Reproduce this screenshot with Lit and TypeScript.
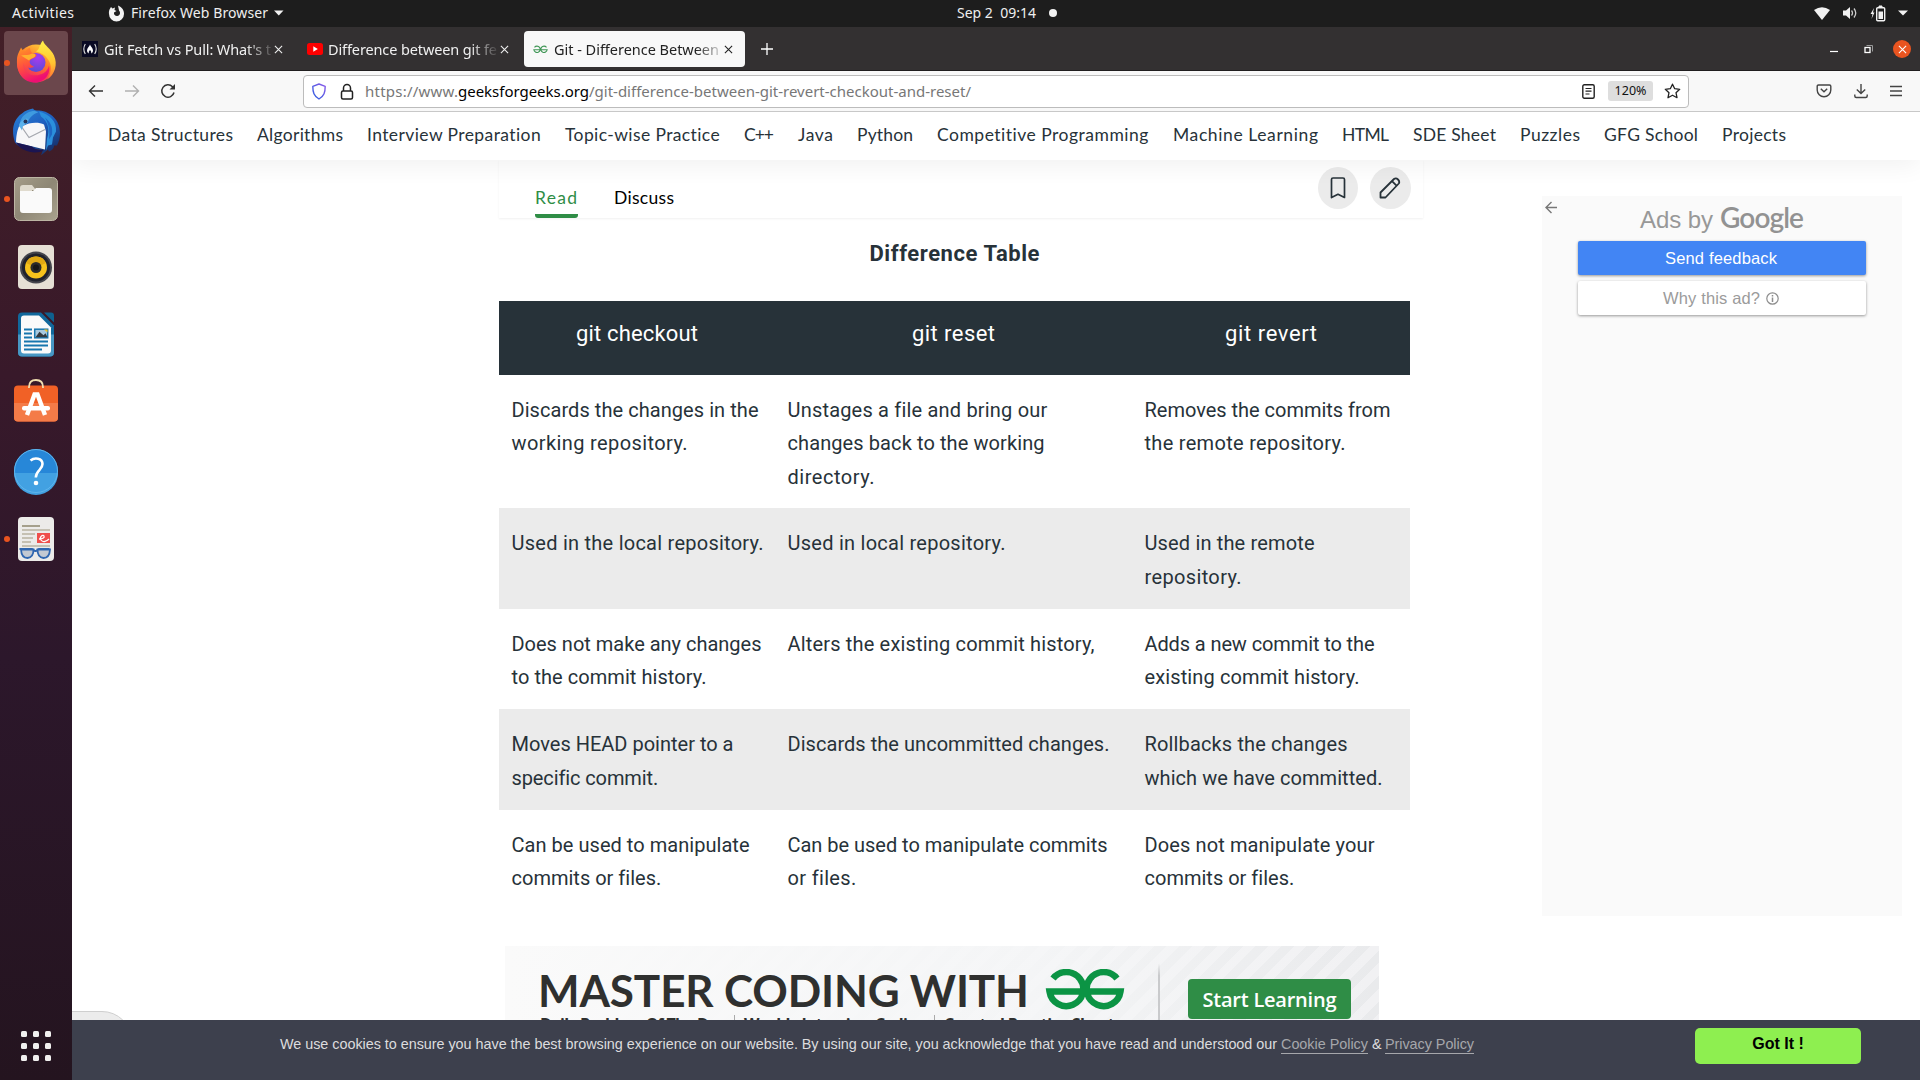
import { LitElement, html, svg, css } from "lit";
import { customElement, property } from "lit/decorators.js";

/* One line of text tracked out to a given measure. */
@customElement("fit-text")
class FitText extends LitElement {
  @property() text = "";
  @property({ type: Number }) width = 0;
  static styles = css`
    :host { display: inline-block; white-space: pre; flex: none; }
    .line { display: inline-block; }
  `;
  render() {
    return html`<span class="line">${this.text}</span>`;
  }
  updated() {
    const line = this.renderRoot.querySelector(".line") as HTMLElement;
    this.style.width = `${this.width}px`;
    line.style.letterSpacing = "0px";
    const natural = line.getBoundingClientRect().width;
    line.style.letterSpacing = `${(this.width - natural) / Math.max(1, this.text.length - 1)}px`;
    line.style.marginRight = "-20px";
  }
}

const fit = (text: string, width: number) => html`<fit-text .text=${text} .width=${width}></fit-text>`;

const nav: [string, number][] = [
  ["Data Structures", 125], ["Algorithms", 86], ["Interview Preparation", 174], ["Topic-wise Practice", 155],
  ["C++", 30], ["Java", 35], ["Python", 56], ["Competitive Programming", 212], ["Machine Learning", 145],
  ["HTML", 47], ["SDE Sheet", 83], ["Puzzles", 60], ["GFG School", 94], ["Projects", 64],
];

const rows: [string, number][][][] = [
  [
    [["Discards the changes in the", 247], ["working repository.", 176]],
    [["Unstages a file and bring our", 259], ["changes back to the working", 257], ["directory.", 87]],
    [["Removes the commits from", 246], ["the remote repository.", 201]],
  ],
  [
    [["Used in the local repository.", 252]],
    [["Used in local repository.", 218]],
    [["Used in the remote", 170], ["repository.", 97]],
  ],
  [
    [["Does not make any changes", 250], ["to the commit history.", 195]],
    [["Alters the existing commit history,", 307]],
    [["Adds a new commit to the", 230], ["existing commit history.", 215]],
  ],
  [
    [["Moves HEAD pointer to a", 222], ["specific commit.", 146]],
    [["Discards the uncommitted changes.", 322]],
    [["Rollbacks the changes", 203], ["which we have committed.", 238]],
  ],
  [
    [["Can be used to manipulate", 238], ["commits or files.", 149]],
    [["Can be used to manipulate commits", 320], ["or files.", 68]],
    [["Does not manipulate your", 230], ["commits or files.", 149]],
  ],
];

const firefoxMark = svg`
  <circle cx="24" cy="26" r="19" fill="url(#ffBody)"/>
  <path d="M24 14C28 12 27 7 31 3c1 5 8 8 11 15 4 9 1 19-7 24 5-7 5-15 1-20-3-5-8-7-12-8z" fill="url(#ffFlame)"/>
  <circle cx="24" cy="25" r="9.5" fill="url(#ffGlobe)"/>
  <path d="M5 22C5 17 8 13 9 10c1 2 2 3 4 4 1-2 3-3 5-4 0 3 1 5 3 6 3 0 4 1 3 3-2 2-5 2-6 4-1 3 1 5 4 6-4 3-9 1-11-4-1 10 9 15 17 12 5-1 8-5 9-9 2 9-5 17-14 17C12 45 4 36 5 22z" fill="url(#ffTail)"/>
  <path d="M9 18c5-1 8 0 11-2 3 0 4 1 3 3-2 2-5 2-6 4z" fill="#ffb02e"/>`;

const dockIcons = {
  firefox: html`<svg viewBox="0 0 48 48" class="ico">
    <defs>
      <linearGradient id="ffBody" x1=".8" y1="0" x2=".3" y2="1"><stop offset="0" stop-color="#ffd93b"/><stop offset=".45" stop-color="#ff7a2a"/><stop offset="1" stop-color="#f0156e"/></linearGradient>
      <linearGradient id="ffFlame" x1="0" y1="0" x2="0" y2="1"><stop offset="0" stop-color="#fff04a"/><stop offset=".6" stop-color="#ffc230"/><stop offset="1" stop-color="#ff6a35"/></linearGradient>
      <linearGradient id="ffTail" x1="0" y1="0" x2=".4" y2="1"><stop offset="0" stop-color="#ff9a22"/><stop offset=".55" stop-color="#ff4f3f"/><stop offset="1" stop-color="#ee0f73"/></linearGradient>
      <radialGradient id="ffGlobe" cx=".6" cy=".25" r=".9"><stop offset="0" stop-color="#a93af0"/><stop offset="1" stop-color="#4a4fd0"/></radialGradient>
    </defs><g transform="translate(0 -1.5)">${firefoxMark}</g></svg>`,
  thunderbird: html`<svg viewBox="0 0 48 48" class="ico">
    <defs><linearGradient id="tb" x1="0" y1="0" x2=".6" y2="1"><stop offset="0" stop-color="#2a86d8"/><stop offset=".5" stop-color="#1f5fc0"/><stop offset="1" stop-color="#17336f"/></linearGradient></defs>
    <g transform="translate(0 1.5)">
    <path d="M3 34C-1 22 1 11 10 5c3-3 7-4 11-5 1 2 3 2 6 2C39 3 48 12 48 24c0 5-1 9-3 13l-3 0c0 3-2 5-5 6l-1-2-7 6 2-6c-6 1-13-1-18-6l1 6C9 39 5 37 3 34z" fill="url(#tb)"/>
    <path d="M27 3c11 3 18 10 17 20l-3 6-1 7-4 1-2 5 1-12c3-9 1-17-6-22z" fill="#2b8fdc"/>
    <path d="M33 9c6 5 8 10 7 17l-3 5c1-9 0-15-4-22z" fill="#1f66c4"/>
    <path d="M8 20c-1-8 2-13 8-16 4-2 8-2 10 0-6 2-9 6-10 10l-5 2z" fill="#3f9be0"/>
    <path d="M12 17c4-3 15-4 20-1l2 7-1 18L4 34c0-5 1-12 3-16z" fill="#f7f7f8"/>
    <path d="M8 16l9 13 16-8" fill="none" stroke="#a5a8ae" stroke-width="1.2"/>
    <path d="M7 17c1-4 4-6 8-7 2 2 1 5-2 6-2 1-3 3-3 6z" fill="#5ab2ec"/>
    <circle cx="13.5" cy="13" r="2" fill="#23355c"/>
    <path d="M4 34l16 4c3 3 8 4 12 4-8 4-22 2-28-8z" fill="#1b1552"/></g></svg>`,
  files: html`<svg viewBox="0 0 48 48" class="ico">
    <defs><linearGradient id="fl" x1="0" y1="0" x2="1" y2="1"><stop offset="0" stop-color="#a59d89"/><stop offset=".5" stop-color="#8e8775"/><stop offset="1" stop-color="#aaa38f"/></linearGradient></defs>
    <rect x="2.5" y="2.5" width="43" height="43" rx="5" fill="url(#fl)" stroke="#bdb6a4"/>
    <path d="M8 13q0-3 3-3h9l4 5h-4v10H8z" fill="#e0dbce"/>
    <path d="M8 16h13l3-3h13q3 0 3 3v19q0 3-3 3H11q-3 0-3-3z" fill="#fafafa"/></svg>`,
  rhythmbox: html`<svg viewBox="0 0 48 48" class="ico">
    <rect x="6" y="2" width="36" height="44" rx="4" fill="#e6e0d5"/>
    <circle cx="24" cy="24.5" r="16" fill="#44454c"/><circle cx="24" cy="24.5" r="14" fill="#20222c"/>
    <circle cx="24" cy="24.5" r="11" fill="#f6c21c"/><path d="M24 24.5L14 20a11 11 0 0 1 20 0z" fill="#e0a813"/>
    <circle cx="24" cy="24.5" r="5.5" fill="#2b2b2b"/><circle cx="24" cy="24.5" r="3" fill="#171717"/></svg>`,
  writer: html`<svg viewBox="0 0 48 48" class="ico">
    <g transform="translate(0 -.5)">
    <path d="M10 2h19l13 13v27q0 4-4 4H10q-4 0-4-4V6q0-4 4-4z" fill="#11689c"/>
    <path d="M6 24h36v18q0 4-4 4H10q-4 0-4-4z" fill="#4797c4"/>
    <path d="M12 5h15l12 12v23q0 3-3 3H12q-3 0-3-3V8q0-3 3-3z" fill="#fafafa"/>
    <path d="M32 2h7q3 0 3 3v7z" fill="#0f618f"/>
    <path d="M12 19h8M12 23h8M12 27h8M12 31h24M12 35h24M12 39h18" stroke="#1776ae" stroke-width="2"/>
    <rect x="22.7" y="18.7" width="13" height="8.6" fill="#a7c9df" stroke="#1776ae" stroke-width="1.5"/>
    <path d="M23.5 26.8l4-5.5 4 3.5 2-2 2 4z" fill="#333a40"/><path d="M32 19h3.5v3z" fill="#f6c31c"/></g></svg>`,
  software: html`<svg viewBox="0 0 48 48" class="ico">
    <g transform="translate(0 -2)">
    <rect x="2" y="8.5" width="44" height="36" rx="4" fill="#f16126"/><path d="M2 26h44v14.5q0 4-4 4H6q-4 0-4-4z" fill="#f47b48"/>
    <path d="M17 11v-1q0-7 7-7t7 7v1" fill="none" stroke="#f0deb0" stroke-width="1.8"/>
    <path d="M15 38l7.5-20.5h3L33 38" fill="none" stroke="#fff" stroke-width="4.4"/>
    <rect x="10" y="29" width="28" height="4.6" rx="2" fill="#fff"/></g></svg>`,
  help: html`<svg viewBox="0 0 48 48" class="ico">
    <circle cx="24" cy="24" r="22" fill="#2787d8"/><path d="M2 26a22 22 0 0 0 44 0z" fill="#42a1e2"/>
    <circle cx="24" cy="24" r="21.5" fill="none" stroke="#5fb5ec"/>
    <path d="M18.5 13.5c4-3.2 12-2.6 12 3.6 0 6-6.700 6.200-6.700 13.400" fill="none" stroke="#fff" stroke-width="2.6"/>
    <circle cx="24" cy="36" r="2.3" fill="#fff"/></svg>`,
  evince: html`<svg viewBox="0 0 48 48" class="ico">
    <rect x="6" y="2" width="36" height="44" rx="4" fill="#ecebe9"/>
    <path d="M10 11h18" stroke="#a5a08c" stroke-width="2"/>
    <path d="M10 15h28M10 19h13M10 23h11M10 27h9M10 31h28" stroke="#c5c0b2" stroke-width="2"/>
    <rect x="25" y="18" width="13" height="10" fill="#ef4e4b"/>
    <path d="M27 24c3 0 6-1 5-3s-5 1-3 4 6 1 8-1" fill="none" stroke="#fff" stroke-width="1.3"/>
    <path d="M7.5 34H20l3 2h1l3-2h10.500" fill="none" stroke="#2f66b0" stroke-width="1.8"/>
    <path d="M9 34.5h12.500q0 8-6 8.500-6 0-6.500-8.500zM25.500 34.500H38q-.5 8.500-6.500 8.500-6-.5-6-8.500z" fill="#c3c9d2" stroke="#2f66b0" stroke-width="1.8"/>
    </svg>`,
};

const cross = html`<svg class="x" viewBox="0 0 10 10" width="9" height="9"><path d="M1 1l8 8M9 1L1 9" stroke="currentColor" stroke-width="1.2"/></svg>`;
const gfg = (w: number, h: number, color: string, sw: number) => html`<svg width=${w} height=${h} viewBox="0 0 80 42">
  <g fill="none" stroke=${color} stroke-width=${sw}>
    <path d="M8 9.500A17 17 0 1 1 4.500 22.500H75.500A17 17 0 1 1 72 9.500"/>
  </g></svg>`;

@customElement("app-root")
class AppRoot extends LitElement {
  static styles = css`
    :host { display: block; width: 1920px; height: 1080px; overflow: hidden; font-family: "Liberation Sans", sans-serif; }
    * { box-sizing: border-box; }
    svg { display: block; flex: none; }
    .desktop { display: grid; grid-template: 27px 1053px / 72px 1848px; height: 1080px; }
    .ui { font-family: "Noto Sans", sans-serif; }

    .topbar { grid-column: 1 / 3; background: #1d1d1d; color: #efefef; font-size: 14px; line-height: 26px; display: flex; align-items: center; padding: 0 12px 1px; }
    .topbar .app { display: flex; align-items: center; margin-left: 34px; gap: 6px; }
    .topbar .clock { display: flex; align-items: center; margin-left: 673px; gap: 13px; }
    .dot { width: 8px; height: 8px; border-radius: 50%; background: #f2f2f2; }
    .tray { margin-left: auto; display: flex; align-items: center; gap: 12px; }

    .dock { background: linear-gradient(#431f27, #38192a 33%, #2c172b 60%, #24141f); display: flex; flex-direction: column; align-items: center; padding: 2px 0 19px; }
    .tile { width: 72px; height: 68px; display: grid; grid-template-columns: 4px 64px 4px; align-items: center; }
    .tile .face { grid-column: 2; grid-row: 1; height: 64px; border-radius: 4px; display: grid; place-items: center; }
    .tile.active .face { background: #6b474c; }
    .tile .run { grid-column: 1; grid-row: 1; width: 6px; height: 6px; border-radius: 50%; background: #e95420; margin-left: 4px; z-index: 1; }
    .ico { width: 48px; height: 48px; }
    .grid { margin-top: auto; display: grid; grid-template-columns: repeat(3, 6px); gap: 6px; }
    .grid i { width: 6px; height: 6px; border-radius: 1.5px; background: #f1f0ef; }

    .window { display: flex; flex-direction: column; background: #fff; min-height: 0; }
    .tabs { height: 44px; flex: none; background: #333031; border-bottom: 1px solid #201e1f; display: flex; align-items: center; padding: 1px 9px 0 0; font-size: 14.5px; }
    .tab { height: 36px; display: flex; align-items: center; color: #f0f0f0; border-radius: 4px; }
    .tab.one { width: 224px; padding-left: 10px; }
    .tab.two { width: 228px; padding-left: 11px; }
    .tab.on { background: #f8f8f8; color: #222; width: 221px; padding-left: 8px; }
    .tab .fav { width: 16px; height: 16px; margin-right: 6px; flex: none; display: grid; place-items: center; }
    .tab .fav.yt { margin-right: 5px; }
    .tab .label { width: 168px; overflow: hidden; white-space: nowrap; -webkit-mask-image: linear-gradient(90deg, #000 142px, transparent 172px); }
    .tab.two .label { width: 170px; }
    .x { margin-left: 2px; }
    .plus { color: #fff; margin-left: 16px; }
    .controls { margin-left: auto; display: flex; align-items: center; }
    .min { margin-right: 26px; }
    .close { width: 18px; height: 18px; border-radius: 50%; background: #e95420; color: #fff; display: grid; place-items: center; margin-left: 20px; }
    .close .x { margin: 0; }

    .tools { height: 41px; flex: none; background: #f8f8f8; border-bottom: 1px solid #c8c8c8; display: flex; align-items: center; padding: 0 17px 0 16px; color: #3c3c3c; }
    .tools .arrows { display: flex; align-items: center; gap: 20px; width: 215px; }
    .url { width: 1386px; height: 33px; border: 1px solid #bcbcbc; border-radius: 4px; background: #fff; display: flex; align-items: center; padding: 0 7px; font-size: 15px; color: #777; }
    .url .host { color: #000; }
    .url .lock { margin-left: 13px; }
    .url .addr { display: flex; margin-left: 11px; line-height: 31px; }
    .url .reader { margin-left: auto; }
    .url .star { margin-left: 11px; }
    .zoomed { margin-left: 13px; width: 45px; height: 20px; border-radius: 3px; background: #dedede; color: #111; font-size: 12.5px; line-height: 20px; text-align: center; }
    .tools .right { display: flex; align-items: center; margin-left: auto; gap: 21.500px; }

    .page { flex: 1; position: relative; overflow: hidden; display: flex; flex-direction: column; }
    .nav { height: 48px; flex: none; display: flex; gap: 24px; padding: 0 36px; font: 17.5px/46px Lato, sans-serif; color: #273239; box-shadow: 0 6px 24px rgba(0, 0, 0, .055); position: relative; z-index: 1; background: #fff; }
    .body { flex: 1; display: flex; padding-left: 427px; align-items: flex-start; min-height: 0; }
    .article { width: 924px; }
    .bar { height: 58px; width: 924px; display: flex; padding: 0 12px 0 36px; font: 17.5px/24px Lato, sans-serif; color: #000; box-shadow: 0 1px 2px rgba(0, 0, 0, .06); }
    .bar .t { padding-top: 26px; height: 58px; margin-right: 36px; }
    .bar .sel { color: #2f8d46; display: flex; flex-direction: column; }
    .bar .sel i { display: block; width: 43px; height: 4px; background: #2f8d46; border-radius: 0 0 3px 3px; margin-top: 4px; }
    .bar .acts { margin-left: auto; display: flex; gap: 12px; padding-top: 7px; }
    .round { width: 40px; height: 42px; border-radius: 50%; background: #ebebeb; display: grid; place-items: center; padding-bottom: 1px; }
    .round.wide { width: 41px; padding-right: 1px; }
    .heading { width: 911px; display: flex; justify-content: center; padding-top: 20px; height: 83px; font: bold 22px/32px Roboto, sans-serif; color: #273239; }
    .table { width: 911px; color: #273239; font: 20px/33.4px Roboto, sans-serif; }
    .row { display: grid; grid-template-columns: 276px 357px 278px; min-height: 100.6px; }
    .row > div { padding: 19px 0 14px 12.5px; }
    .row:nth-child(odd) { background: #ebebeb; }
    .row.head { background: #273239; color: #fff; min-height: 74px; height: 74px; font-size: 22px; line-height: 32px; }
    .row.head > div { padding: 17px 0 0; display: flex; justify-content: center; }
    .row fit-text { display: block; }
    .row.head fit-text { display: inline-block; }
    .banner { width: 874px; height: 108px; margin: 35px 0 0 6px; display: flex; background: linear-gradient(90deg, #fafafa, rgba(246, 247, 248, .85) 60%, transparent), repeating-linear-gradient(135deg, #f1f1f3 0 9px, #e9eaec 9px 18px); }
    .banner .copy { width: 655px; padding: 18px 0 0 33px; border-right: 2px solid transparent; border-image: linear-gradient(transparent 18px, #c9cacc 30px) 1; border-left: 0; border-top: 0; border-bottom: 0; color: #2f302f; }
    .banner .title { display: flex; gap: 16px; font: bold 44px/52px Lato, sans-serif; height: 52px; }
    .banner .title svg { margin-top: 5px; }
    .banner .sub { font: bold 16px/18px "Open Sans", sans-serif; display: flex; margin: -1px 0 0 2px; }
    .banner .sub span { border-left: 1px solid #aaa; margin: 0 9px 0 8px; }
    .banner .cta { margin: 33px 0 0 28px; width: 163px; height: 40px; border-radius: 4px; background: #2f8d46; color: #fff; font: 600 20px/41px "Open Sans", sans-serif; display: flex; justify-content: center; }

    .ads { width: 360px; height: 720px; margin: 36px 0 0 119px; background: #fafafa; padding: 0 36px; color: #989898; display: flex; flex-direction: column; position: relative; }
    .ads .back { position: absolute; left: 3px; top: 5px; }
    .ads .by { display: flex; justify-content: center; align-items: baseline; height: 45px; padding-top: 1px; font-size: 24px; line-height: 40px; gap: 7px; }
    .ads .by b { font: 600 28px/40px Lato, sans-serif; color: #929292; }
    .ads .btn { height: 34px; border-radius: 2px; box-shadow: 0 1px 3px rgba(0, 0, 0, .4); font-size: 16.5px; display: flex; align-items: center; justify-content: center; gap: 6px; background: #fff; margin-bottom: 6px; padding-right: 2px; color: #9b9b9b; }
    .ads .btn.blue { background: #4285f4; color: #fff; padding-top: 1px; }

    .feedback { position: absolute; left: -20px; top: 899px; width: 80px; height: 40px; border: 1px solid #cfcfcf; background: #ececec; border-radius: 0 30px 0 0; }
    .cookie { position: absolute; left: 0; right: 0; bottom: 0; height: 60px; background: #3d404d; color: #dcdcde; font-size: 14.4px; display: flex; padding: 8px 59px 0 208px; z-index: 2; }
    .cookie .msg { line-height: 32px; display: flex; gap: 4px; }
    .cookie a { color: #a6a7ab; line-height: 17px; height: 18px; margin-top: 8px; border-bottom: 1px solid #a6a7ab; }
    .cookie .ok { margin-left: auto; width: 166px; height: 36px; border-radius: 5px; background: #8eef50; color: #000; font: bold 16px/31px "Liberation Sans", sans-serif; text-align: center; }
  `;

  tile(icon: unknown, running = false, active = false) {
    return html`<div class="tile ${active ? "active" : ""}">${running ? html`<i class="run"></i>` : ""}<div class="face">${icon}</div></div>`;
  }

  render() {
    return html`<div class="desktop">
      <header class="topbar ui">
        ${fit("Activities", 62)}
        <div class="app">
          <svg width="17" height="17" viewBox="0 0 17 17"><path d="M1.500 4.500L3 2l1.500 1.500L7 2.500 6.500 5 8.500 6 6 7.500C5.500 10 8 11.500 10 10.800 12.500 10 12.500 7 11 5.500L10 .5C14 2 16.300 5.500 16 9A7.500 7.500 0 0 1 1 9C.8 7 1 6 1.500 4.500z" fill="#f2f2f2"/></svg>
          ${fit("Firefox Web Browser", 137)}
          <svg width="10" height="6" viewBox="0 0 10 6"><path d="M0 .5h9.500L4.750 5.500z" fill="#f2f2f2"/></svg>
        </div>
        <div class="clock">${fit("Sep 2  09:14", 79)}<i class="dot"></i></div>
        <div class="tray">
          <svg width="16" height="13" viewBox="0 0 16 13"><path d="M0 3Q8-2.500 16 3L8 13z" fill="#f2f2f2"/></svg>
          <svg width="16" height="14" viewBox="0 0 16 14"><path d="M1 4.500h3L8 1v12L4 9.500H1z" fill="#f2f2f2"/><path d="M9.500 4.500q2 2.500 0 5M12 2.500q3.500 4.500 0 9" fill="none" stroke="#ccc" stroke-width="1.3"/></svg>
          <svg width="16" height="17" viewBox="0 0 16 17"><path d="M4 3L.5 9H2.500L1.500 14 4.500 7.500H3z" fill="#f2f2f2"/><path d="M9 2h3V1h-3z" fill="#f2f2f2" stroke="#f2f2f2"/><rect x="6.700" y="2.700" width="8" height="13" rx="1" fill="none" stroke="#f2f2f2" stroke-width="1.4"/><path d="M8.500 6.500h4.500v7.500H8.500z" fill="#f2f2f2"/></svg>
          <svg width="10" height="6" viewBox="0 0 10 6"><path d="M0 .5h10L5 5.500z" fill="#f2f2f2"/></svg>
        </div>
      </header>

      <aside class="dock">
        ${this.tile(dockIcons.firefox, true, true)}
        ${this.tile(dockIcons.thunderbird)}
        ${this.tile(dockIcons.files, true)}
        ${this.tile(dockIcons.rhythmbox)}
        ${this.tile(dockIcons.writer)}
        ${this.tile(dockIcons.software)}
        ${this.tile(dockIcons.help)}
        ${this.tile(dockIcons.evince, true)}
        <div class="grid">${Array.from({ length: 9 }, () => html`<i></i>`)}</div>
      </aside>

      <main class="window">
        <div class="tabs ui">
          <div class="tab one">
            <div class="fav"><svg width="16" height="16" viewBox="0 0 16 16"><path d="M0 0h16v16H0z" fill="#0a0a23"/><path d="M3.300 3q-3 5 0 10M12.700 3q3 5 0 10" fill="none" stroke="#ddd" stroke-width="1.1"/><path d="M8 3.500c.5 2 3 3.500 3 6 0 1.500-1 2.500-2 3 .8-1.500-.2-2.500-1-3.500-.8 1-1.800 2-1 3.500-1-.5-2-1.500-2-3 0-2.500 2.500-4 3-6z" fill="#fff"/></svg></div>
            <div class="label">${fit("Git Fetch vs Pull: What's t", 167)}</div>${cross}
          </div>
          <div class="tab two">
            <div class="fav yt"><svg width="16" height="12" viewBox="0 0 16 12"><rect width="16" height="12" rx="2.500" fill="#f00"/><path d="M6.300 3.300v5.400L10.800 6z" fill="#fff"/></svg></div>
            <div class="label">${fit("Difference between git fe", 169)}</div>${cross}
          </div>
          <div class="tab on">
            <div class="fav">${gfg(15, 9, "#3f9655", 6)}</div>
            <div class="label">${fit("Git - Difference Between", 165)}</div>${cross}
          </div>
          <svg class="plus" width="12" height="12" viewBox="0 0 12 12"><path d="M6 0v12M0 6h12" stroke="currentColor" stroke-width="1.3"/></svg>
          <div class="controls">
            <svg class="min" width="8" height="10" viewBox="0 0 8 10"><path d="M0 7.500h8" stroke="#fff" stroke-width="1.2"/></svg>
            <svg width="9" height="9" viewBox="0 0 9 9"><path d="M2.500.5h6v6" fill="none" stroke="#999"/><rect x="1" y="2.500" width="5" height="5" fill="none" stroke="#fff" stroke-width="1.3"/></svg>
            <div class="close">${cross}</div>
          </div>
        </div>

        <div class="tools ui">
          <div class="arrows">
            <svg width="16" height="14" viewBox="0 0 16 14"><path d="M15 7H1.500M7 1.500L1.500 7 7 12.500" fill="none" stroke="#333" stroke-width="1.4"/></svg>
            <svg width="16" height="14" viewBox="0 0 16 14"><path d="M1 7h13.500M9 1.500L14.500 7 9 12.500" fill="none" stroke="#b0b0b0" stroke-width="1.4"/></svg>
            <svg width="16" height="16" viewBox="0 0 16 16"><path d="M14 9.500A6.200 6.200 0 1 1 12.500 3.700L14 5" fill="none" stroke="#333" stroke-width="1.5"/><path d="M15 1v5.500H9.500z" fill="#333"/></svg>
          </div>
          <div class="url">
            <svg width="16" height="17" viewBox="0 0 16 17"><defs><linearGradient id="sh" x1="0" y1="1" x2="1" y2="0"><stop offset="0" stop-color="#2c5fe0"/><stop offset="1" stop-color="#8a5ae8"/></linearGradient></defs><path d="M8 1l6.200 2.300c0 6-1 9.700-6.200 12.700C2.800 13 1.800 9.300 1.800 3.300z" fill="none" stroke="url(#sh)" stroke-width="1.4" stroke-linejoin="round"/></svg>
            <svg class="lock" width="14" height="17" viewBox="0 0 14 17"><rect x="1.500" y="8" width="11" height="8" rx="1.500" fill="none" stroke="#222" stroke-width="1.5"/><path d="M3.500 8V5a3.500 3.500 0 0 1 7 0v3" fill="none" stroke="#222" stroke-width="1.5"/></svg>
            <div class="addr">${fit("https://www.", 93)}<span class="host">${fit("geeksforgeeks.org", 131)}</span>${fit("/git-difference-between-git-revert-checkout-and-reset/", 382)}</div>
            <svg class="reader" width="13" height="15" viewBox="0 0 13 15"><rect x=".8" y=".8" width="11.400" height="13.400" rx="1.500" fill="none" stroke="#222" stroke-width="1.4"/><path d="M3.500 4.500h6M3.500 7.200h6M3.500 10h4" stroke="#222" stroke-width="1.2"/></svg>
            <div class="zoomed">120%</div>
            <svg class="star" width="17" height="16" viewBox="0 0 17 16"><path d="M8.500 1.200l2.200 4.500 5 .6-3.700 3.400 1 5-4.500-2.500L4 14.700l1-5L1.300 6.300l5-.6z" fill="none" stroke="#222" stroke-width="1.3" stroke-linejoin="round"/></svg>
          </div>
          <div class="right">
            <svg width="16" height="14" viewBox="0 0 16 14"><path d="M2.500 1h11q1.300 0 1.300 1.300V6A6.800 6.800 0 0 1 1.200 6V2.300Q1.200 1 2.500 1z" fill="none" stroke="#444" stroke-width="1.4"/><path d="M4.800 4.800L8 7.800l3.200-3" fill="none" stroke="#444" stroke-width="1.4"/></svg>
            <svg width="14" height="16" viewBox="0 0 14 16"><path d="M7 1v9.500M2.800 6.500L7 10.500l4.200-4M.8 11.500V13q0 1.500 1.500 1.500h9.400q1.500 0 1.500-1.500v-1.500" fill="none" stroke="#444" stroke-width="1.4"/></svg>
            <svg width="14" height="12" viewBox="0 0 14 12"><path d="M1 1.500h12M1 6h12M1 10.500h12" stroke="#444" stroke-width="1.3"/></svg>
          </div>
        </div>

        <div class="page">
          <nav class="nav">${nav.map(([t, w]) => fit(t, w))}</nav>
          <div class="body">
            <section class="article">
              <div class="bar">
                <div class="t sel">${fit("Read", 42)}<i></i></div>
                <div class="t">${fit("Discuss", 60)}</div>
                <div class="acts">
                  <div class="round"><svg width="16" height="22" viewBox="0 0 16 22"><path d="M1.500 20.500V2.500q0-1.500 1.500-1.500h10q1.500 0 1.500 1.500v18L8 17.300z" fill="none" stroke="#273239" stroke-width="1.7" stroke-linejoin="round"/></svg></div>
                  <div class="round wide"><svg width="22" height="22" viewBox="0 0 22 22"><path d="M1.500 20.500v-5L15 2q2-1.500 4 .5t.8 4L6.500 20.500zM13 4.200l5 5" fill="none" stroke="#273239" stroke-width="1.8" stroke-linejoin="round"/></svg></div>
                </div>
              </div>
              <div class="heading">${fit("Difference Table", 170)}</div>
              <div class="table">
                <div class="row head"><div>${fit("git checkout", 122)}</div><div>${fit("git reset", 83)}</div><div>${fit("git revert", 92)}</div></div>
                ${rows.map((r) => html`<div class="row">${r.map((cell) => html`<div>${cell.map(([t, w]) => fit(t, w))}</div>`)}</div>`)}
              </div>
              <div class="banner">
                <div class="copy">
                  <div class="title">${fit("MASTER CODING WITH", 491)}${gfg(80, 42, "#0b9444", 6.5)}</div>
                  <div class="sub">${fit("Daily Problem Of The Day", 186)}<span></span>${fit("Weekly Interview Coding", 182)}<span></span>${fit("Curated Practice Sheets", 178)}</div>
                </div>
                <div class="cta">${fit("Start Learning", 134)}</div>
              </div>
            </section>
            <aside class="ads">
              <svg class="back" width="13" height="13" viewBox="0 0 13 13"><path d="M12 6.500H1.500M6.500 1L1 6.500 6.500 12" fill="none" stroke="#777" stroke-width="1.4"/></svg>
              <div class="by">${fit("Ads by", 73)}<b>${fit("Google", 84)}</b></div>
              <div class="btn blue">${fit("Send feedback", 112)}</div>
              <div class="btn">${fit("Why this ad?", 97)}<svg width="13" height="13" viewBox="0 0 13 13"><circle cx="6.500" cy="6.500" r="5.700" fill="none" stroke="#8d8d8d" stroke-width="1.2"/><path d="M6.500 5.500v4.500M6.500 3v1.500" stroke="#8d8d8d" stroke-width="1.5"/></svg></div>
            </aside>
          </div>
          <div class="feedback"></div>
          <div class="cookie">
            <div class="msg">${fit("We use cookies to ensure you have the best browsing experience on our website. By using our site, you acknowledge that you have read and understood our", 997)}<a>${fit("Cookie Policy", 87)}</a>${fit("&", 9)}<a>${fit("Privacy Policy", 89)}</a></div>
            <div class="ok">Got It !</div>
          </div>
        </div>
      </main>
    </div>`;
  }
}
